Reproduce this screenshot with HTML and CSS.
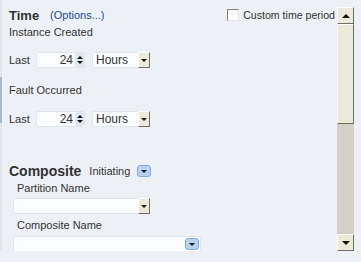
FILE: index.html
```html
<!DOCTYPE html>
<html lang="en">
<head>
  <meta charset="utf-8">
  <title>Search filters</title>
  <link rel="stylesheet" href="styles.css">
</head>
<body>

  <div class="frame">
    <div class="edge"><div class="edge-grip"></div></div>

    <div class="pane">
      <div class="head">
        <h2 class="title">Time</h2>
        <a class="link" href="#">(Options...)</a>
        <label class="custom"><span class="check"></span>Custom time period</label>
      </div>

      <p class="label label-first">Instance Created</p>
      <div class="row">
        <span class="row-text">Last</span>
        <span class="num">
          <span class="num-value">24</span>
          <span class="spin"><i class="up"></i><i class="down"></i></span>
        </span>
        <span class="select select-hours">
          <span class="select-value">Hours</span>
          <span class="btn-classic"><i class="down"></i></span>
        </span>
      </div>

      <p class="label label-fault">Fault Occurred</p>
      <div class="row row-second">
        <span class="row-text">Last</span>
        <span class="num">
          <span class="num-value">24</span>
          <span class="spin"><i class="up"></i><i class="down"></i></span>
        </span>
        <span class="select select-hours">
          <span class="select-value">Hours</span>
          <span class="btn-classic"><i class="down"></i></span>
        </span>
      </div>

      <div class="head head-composite">
        <h2 class="title title-big">Composite</h2>
        <span class="mode">Initiating</span>
        <span class="btn-blue"><i class="down"></i></span>
      </div>

      <div class="fields">
        <p class="field-label">Partition Name</p>
        <span class="select select-partition">
          <span class="select-value"></span>
          <span class="btn-classic"><i class="down"></i></span>
        </span>
        <p class="field-label field-label-second">Composite Name</p>
        <span class="select select-composite">
          <span class="select-value"></span>
          <span class="btn-blue btn-blue-inset"><i class="down"></i></span>
        </span>
      </div>
    </div>

    <div class="scrollbar">
      <div class="sb-btn"><i class="up"></i></div>
      <div class="sb-thumb"></div>
      <div class="sb-track"></div>
      <div class="sb-btn"><i class="down"></i></div>
    </div>
  </div>

</body>
</html>
```

FILE: styles.css
```css
*, *::before, *::after {
  margin: 0;
  padding: 0;
  box-sizing: border-box;
}

body {
  background-color: #edf1f5;
  color: #333333;
  font-family: "Liberation Sans", Arial, sans-serif;
  font-size: 11px;
}

.frame {
  display: flex;
  height: 251px;
  overflow: hidden;
}

.edge {
  width: 2px;
  flex: none;
  background-color: #e0e5eb;
}

.edge-grip {
  height: 46px;
  margin-top: 77px;
  background-color: #a9bccf;
}

.pane {
  flex: 1;
  padding: 6px 2px 0 7px;
  overflow: hidden;
}

/* section headers */

.head {
  display: flex;
  align-items: center;
  height: 18px;
}

.title {
  font-size: 13px;
  font-weight: bold;
  color: #333333;
}

.title-big {
  font-size: 14px;
}

.link {
  margin-left: 11px;
  color: #1c4a95;
  text-decoration: none;
}

.custom {
  display: flex;
  align-items: center;
  gap: 4px;
  margin-left: auto;
  font-size: 10.6px;
}

.check {
  width: 12px;
  height: 12px;
  background-color: #ffffff;
  border: 1px solid #86847a;
  border-right-color: #e6e4dc;
  border-bottom-color: #e6e4dc;
}

.label {
  height: 14px;
  line-height: 14px;
}

.label-first {
  margin-top: 1px;
}

.label-fault {
  margin-top: 15px;
}

/* "Last 24 Hours" rows */

.row {
  display: flex;
  align-items: center;
  height: 16px;
  margin-top: 13px;
}

.row-second {
  margin-top: 14px;
}

.row-text {
  width: 27px;
  font-size: 11px;
}

.num {
  display: flex;
  width: 49px;
  height: 16px;
  background-color: #fbfdff;
  border: 1px solid #dde5ec;
  border-radius: 2px;
}

.num-value {
  flex: 1;
  text-align: right;
  line-height: 14px;
  padding-right: 2px;
  font-size: 12px;
}

.spin {
  display: flex;
  flex-direction: column;
  justify-content: center;
  gap: 2px;
  width: 9px;
  background-color: #dfe7f0;
  border-radius: 2px;
}

i {
  display: block;
  width: 0;
  height: 0;
  margin: 0 auto;
  border-left: 3px solid transparent;
  border-right: 3px solid transparent;
}

i.up {
  border-bottom: 3px solid #111111;
}

i.down {
  border-top: 3px solid #111111;
}

.select {
  display: flex;
  height: 16px;
  background-color: #fbfdff;
  border: 1px solid #dde5ec;
  border-radius: 2px;
}

.select-hours {
  width: 58px;
  margin-left: 7px;
}

.select-value {
  flex: 1;
  padding-left: 3px;
  line-height: 14px;
  font-size: 12px;
}

.btn-classic {
  display: flex;
  align-items: center;
  width: 12px;
  margin: -1px -1px -1px 0;
  background-color: #ece9d8;
  border: 1px solid #ffffff;
  border-right-color: #716f64;
  border-bottom-color: #716f64;
}

/* composite */

.head-composite {
  margin-top: 35px;
}

.mode {
  margin-left: 8px;
  font-size: 11px;
}

.btn-blue {
  display: flex;
  align-items: center;
  width: 14px;
  height: 12px;
  margin-left: 7px;
  background-color: #b8d3f0;
  border: 1px solid #86aedb;
  border-radius: 3px;
}

.fields {
  padding-left: 4px;
}

.field-label {
  height: 14px;
  margin-top: 1px;
  padding-left: 4px;
  line-height: 14px;
}

.field-label-second {
  margin-top: 4px;
}

.select-partition {
  width: 137px;
  margin-top: 3px;
}

.select-composite {
  width: 188px;
  margin-top: 4px;
  align-items: center;
}

.btn-blue-inset {
  margin: 0 1px 0 0;
}

/* fake classic scrollbar */

.scrollbar {
  display: flex;
  flex-direction: column;
  width: 17px;
  flex: none;
  margin: 7px 7px 0 0;
}

.sb-btn,
.sb-thumb {
  background-color: #ece9d8;
  border: 1px solid #ffffff;
  border-right-color: #716f64;
  border-bottom-color: #716f64;
}

.sb-btn {
  display: flex;
  align-items: center;
  height: 17px;
}

.sb-btn i {
  border-left-width: 4px;
  border-right-width: 4px;
  border-top-width: 4px;
  border-bottom-width: 4px;
}

.sb-thumb {
  height: 100px;
}

.sb-track {
  flex: 1;
  background-color: #d4d0c8;
}
```
